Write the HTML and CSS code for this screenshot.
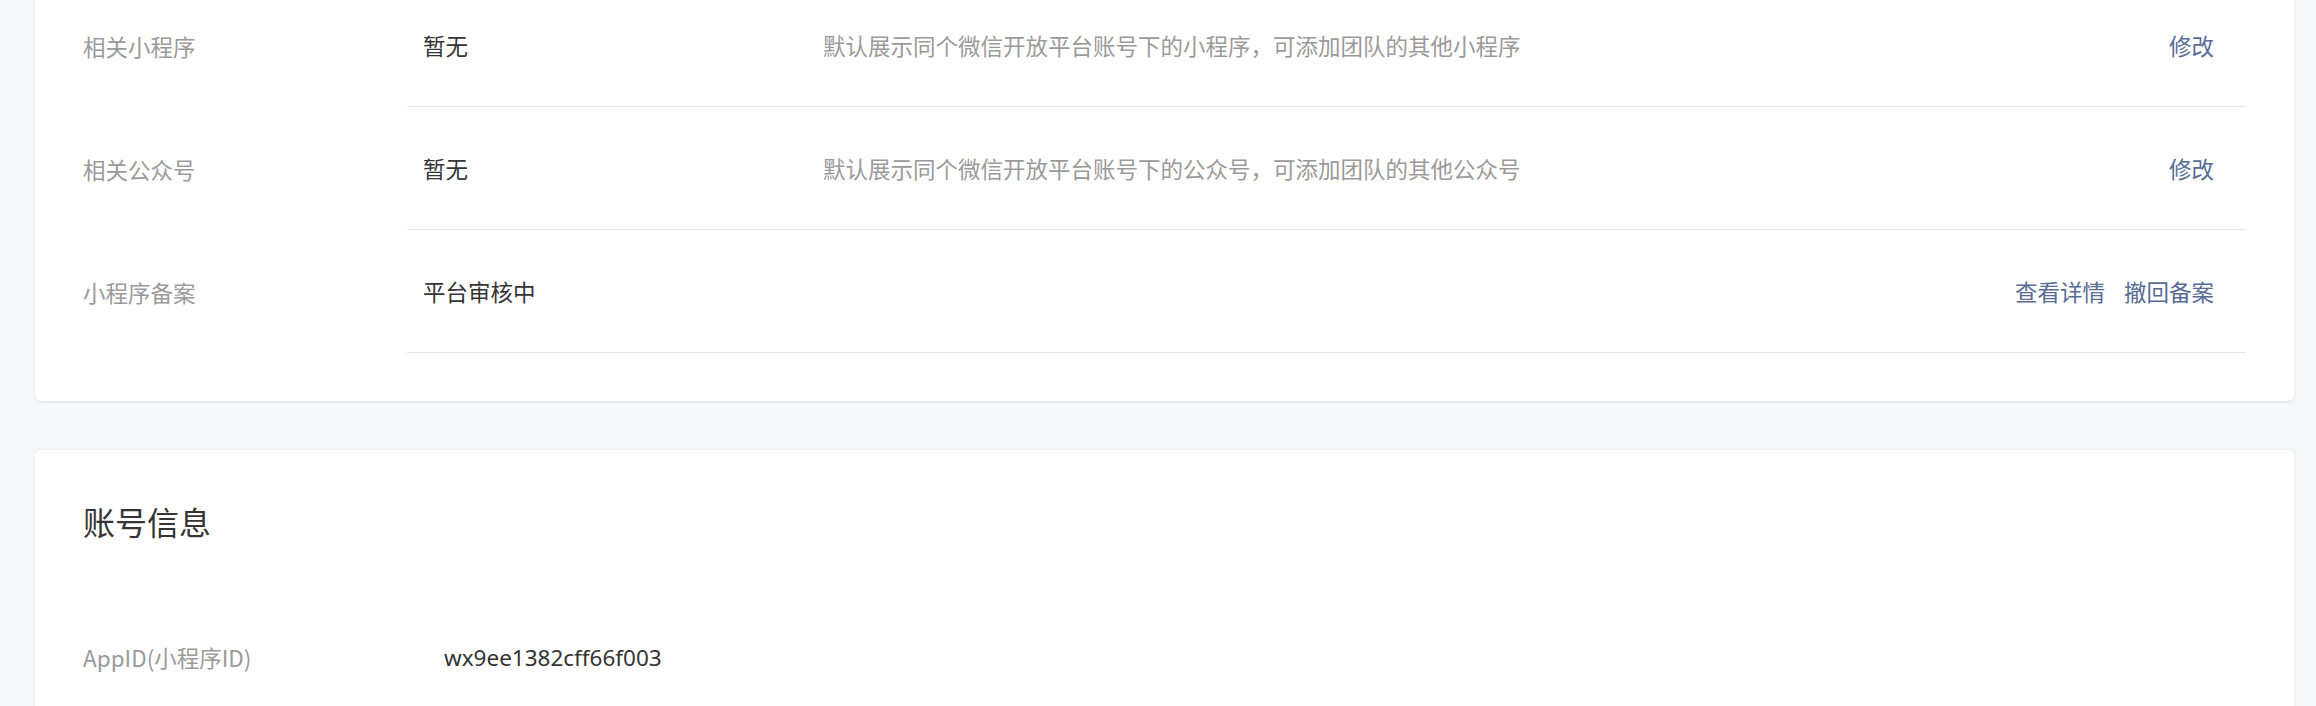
FILE: index.html
```html
<!DOCTYPE html>
<html lang="zh-CN">
<head>
    <meta charset="UTF-8">
    <meta name="viewport" content="width=device-width, initial-scale=1.0">
    <title>设置</title>
    <link rel="stylesheet" href="styles.css">
</head>
<body>
    <div class="page">
        <!-- 基本设置 -->
        <section class="card card-basic">
            <div class="row">
                <div class="row-label">相关小程序</div>
                <div class="row-body">
                    <div class="row-value">暂无</div>
                    <div class="row-desc">默认展示同个微信开放平台账号下的小程序，可添加团队的其他小程序</div>
                    <div class="row-actions">
                        <a href="#">修改</a>
                    </div>
                </div>
            </div>
            <div class="row">
                <div class="row-label">相关公众号</div>
                <div class="row-body">
                    <div class="row-value">暂无</div>
                    <div class="row-desc">默认展示同个微信开放平台账号下的公众号，可添加团队的其他公众号</div>
                    <div class="row-actions">
                        <a href="#">修改</a>
                    </div>
                </div>
            </div>
            <div class="row">
                <div class="row-label">小程序备案</div>
                <div class="row-body">
                    <div class="row-value">平台审核中</div>
                    <div class="row-desc"></div>
                    <div class="row-actions">
                        <a href="#">查看详情</a>
                        <a href="#">撤回备案</a>
                    </div>
                </div>
            </div>
        </section>

        <!-- 账号信息 -->
        <section class="card card-account">
            <h2 class="card-title">账号信息</h2>
            <div class="info-row">
                <div class="info-label">AppID(小程序ID)</div>
                <div class="info-value">wx9ee1382cff66f003</div>
            </div>
        </section>
    </div>
</body>
</html>
```

FILE: styles.css
```css
/* 页面基础 */
body {
    margin: 0;
    background-color: #f6f7f9;
    font-family: "Noto Sans CJK SC", "Noto Sans", sans-serif;
    font-size: 22.5px;
    color: #353535;
}

.page {
    padding: 0 22px 0 35px;
    margin-top: -16px;
}

/* 卡片 */
.card {
    background-color: #ffffff;
    border-radius: 6px;
    box-shadow: 0 1px 3px rgba(0, 0, 0, 0.1);
}

.card-basic {
    padding: 0 48px 48px;
    border-top-left-radius: 0;
    border-top-right-radius: 0;
}

.card-account {
    margin-top: 48px;
    padding: 47px 48px 40px;
    border-top: 1px solid #eef0f3;
}

/* 设置行 */
.row {
    display: flex;
}

.row-label {
    width: 324px;
    flex-shrink: 0;
    display: flex;
    align-items: center;
    color: #9a9a9a;
}

.row-body {
    flex: 1;
    display: flex;
    align-items: center;
    height: 122px;
    padding: 0 32px 0 16px;
    border-bottom: 1px solid #e7e7e7;
}

.row-value {
    width: 400px;
    flex-shrink: 0;
}

.row-desc {
    flex: 1;
    color: #9a9a9a;
}

.row-actions a {
    color: #576b95;
    text-decoration: none;
    margin-left: 14px;
}

/* 账号信息 */
.card-title {
    margin: 0 0 50px;
    font-size: 32px;
    font-weight: normal;
    line-height: 48px;
    color: #353535;
}

.info-row {
    display: flex;
    align-items: center;
    height: 124px;
}

.info-label {
    width: 361px;
    flex-shrink: 0;
    color: #9a9a9a;
}

.info-value {
    font-family: "Noto Sans", "Noto Sans CJK SC", sans-serif;
}
```
